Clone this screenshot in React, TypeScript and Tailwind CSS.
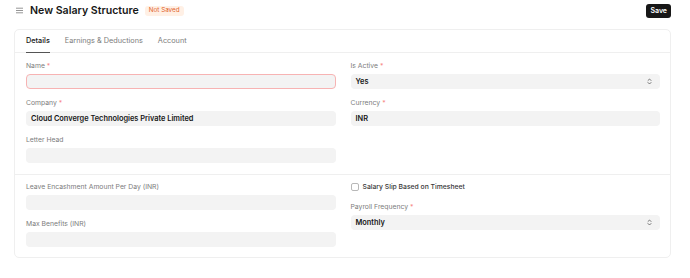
import { ReactNode } from "react"

function Label({ text, required }: { text: string; required?: boolean }) {
  return (
    <div className="h-[8px] flex items-center text-[6.8px] leading-none text-[#7c7c7c]">
      {text}
      {required && <span className="ml-[2px] text-[#f78585]">*</span>}
    </div>
  )
}

function Chevrons() {
  return (
    <svg width="5" height="7" viewBox="0 0 5 7" fill="none" stroke="#555" strokeWidth="0.8" strokeLinecap="round" strokeLinejoin="round">
      <path d="M1 2.5 L2.5 1 L4 2.5" />
      <path d="M1 4.5 L2.5 6 L4 4.5" />
    </svg>
  )
}

function Input({ value, error, select }: { value?: string; error?: boolean; select?: boolean }) {
  return (
    <div
      className={`mt-[4px] h-[15px] rounded-[4px] bg-[#f3f3f3] flex items-center justify-between px-[5px] text-[7.4px] font-semibold text-[#171717] ${
        error ? "border border-[#f7b3b3]" : ""
      }`}
    >
      <span>{value}</span>
      {select && (
        <span className="mr-[3px]">
          <Chevrons />
        </span>
      )}
    </div>
  )
}

function Field({
  label,
  required,
  value,
  error,
  select,
}: {
  label: string
  required?: boolean
  value?: string
  error?: boolean
  select?: boolean
}) {
  return (
    <div className="mt-[10px] first:mt-0">
      <Label text={label} required={required} />
      <Input value={value} error={error} select={select} />
    </div>
  )
}

function Section({ left, right, last }: { left: ReactNode; right: ReactNode; last?: boolean }) {
  return (
    <div
      className={`grid grid-cols-2 gap-x-[15px] pl-[11px] pr-[10px] ${
        last ? "pt-[8px] pb-[10px]" : "pt-[9px] pb-[11px] border-b border-[#efefef]"
      }`}
    >
      <div>{left}</div>
      <div>{right}</div>
    </div>
  )
}

export default function App() {
  return (
    <div className="w-[690px] h-[278px] bg-white font-['Inter',sans-serif] overflow-hidden">
      <div className="h-[22px] flex items-center justify-between pl-[16px] pr-[19px]">
        <div className="flex items-center">
          <svg width="7" height="7" viewBox="0 0 7 7" stroke="#8a8a8a" strokeWidth="0.9">
            <path d="M0 1.2 H7 M0 3.5 H7 M0 5.8 H7" />
          </svg>
          <span className="ml-[7px] text-[10.6px] font-semibold text-[#171717]">New Salary Structure</span>
          <span className="ml-[6px] h-[10px] px-[4px] rounded-[3px] bg-[#fff0e5] text-[#e2632a] text-[6.3px] flex items-center">
            Not Saved
          </span>
        </div>
        <button className="h-[14px] px-[4px] rounded-[3px] bg-[#171717] text-white text-[7px] font-semibold">Save</button>
      </div>

      <div className="mt-[7px] ml-[14px] mr-[19px] border border-[#efefef] rounded-[5px]">
        <div className="h-[23px] flex items-end gap-[15px] pl-[11px] border-b border-[#efefef] text-[7.3px]">
          <div className="h-full flex items-center text-[#171717] font-medium border-b border-[#555] mb-[-1px]">Details</div>
          <div className="h-full flex items-center text-[#7c7c7c]">Earnings &amp; Deductions</div>
          <div className="h-full flex items-center text-[#7c7c7c]">Account</div>
        </div>

        <Section
          left={
            <>
              <Field label="Name" required error />
              <Field label="Company" required value="Cloud Converge Technologies Private Limited" />
              <Field label="Letter Head" />
            </>
          }
          right={
            <>
              <Field label="Is Active" required value="Yes" select />
              <Field label="Currency" required value="INR" />
            </>
          }
        />

        <Section
          last
          left={
            <>
              <Field label="Leave Encashment Amount Per Day (INR)" />
              <Field label="Max Benefits (INR)" />
            </>
          }
          right={
            <>
              <div className="h-[8px] flex items-center">
                <div className="w-[8px] h-[8px] rounded-[2px] border border-[#b8b8b8] bg-white" />
                <span className="ml-[4px] text-[6.8px] font-medium text-[#383838]">Salary Slip Based on Timesheet</span>
              </div>
              <div className="mt-[12px]">
                <Label text="Payroll Frequency" required />
                <Input value="Monthly" select />
              </div>
            </>
          }
        />
      </div>
    </div>
  )
}
